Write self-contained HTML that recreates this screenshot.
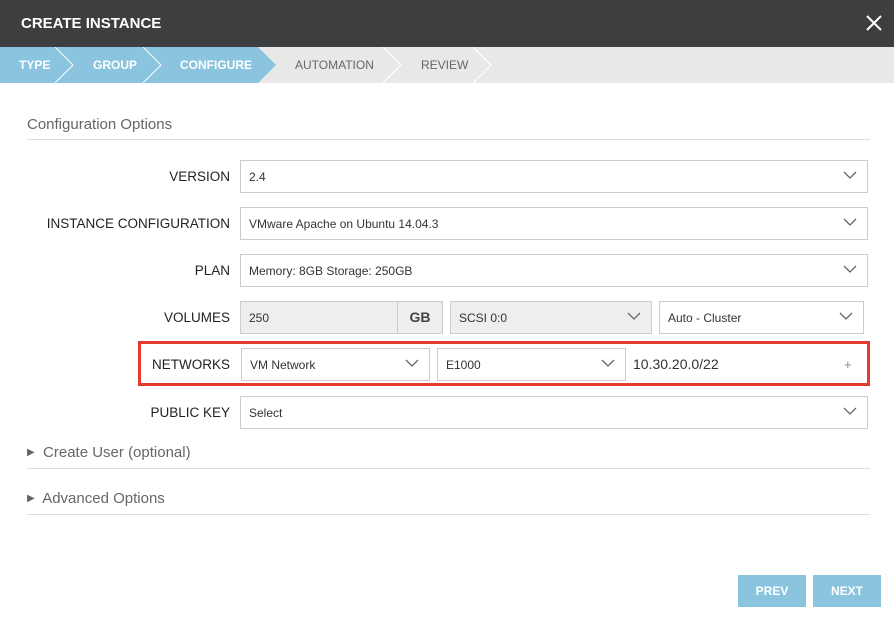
<!DOCTYPE html>
<html><head><style>
*{box-sizing:border-box;margin:0;padding:0}
body{width:894px;height:620px;background:#fff;font-family:"Liberation Sans",sans-serif;position:relative;overflow:hidden;color:#333}
.a{position:absolute}
.hdr{left:0;top:0;width:894px;height:47px;background:#3d3e40;color:#fff;font-size:15px;font-weight:bold;padding:15px 0 0 21px}
.bc{left:0;top:47px;width:894px;height:36px;background:#e8e8e6}
.bc span{position:absolute;top:11px;font-size:12px;font-weight:bold;color:#fff}
.lbl{font-size:13.5px;color:#222;text-align:right;width:200px;left:30px}
.sel{border:1px solid #ccc;background:#fff;height:33px;font-size:12px;padding:9px 8px;color:#333}
.chev{position:absolute;right:10px;top:9px}
.line{height:1px;background:#ddd;left:27px;width:843px}
.btn{background:#8ac4de;color:#fff;font-size:12px;font-weight:bold;text-align:center;padding-top:9px;height:32px}
</style></head><body>
<div class="a hdr">CREATE INSTANCE</div>
<svg class="a" style="left:865px;top:14px" width="18" height="18"><path d="M2 2L16 16M16 2L2 16" stroke="#fff" stroke-width="2"/></svg>
<div class="a bc">
<svg width="894" height="36" style="position:absolute;left:0;top:0">
<polygon points="0,0 258,0 276,18 258,36 0,36" fill="#8ac4de"/>
<polyline points="55,0 73,18 55,36" fill="none" stroke="#fff" stroke-width="1"/>
<polyline points="143,0 161,18 143,36" fill="none" stroke="#fff" stroke-width="1"/>
<polyline points="383,0 401,18 383,36" fill="none" stroke="#fff" stroke-width="1.2"/>
<polyline points="473,0 491,18 473,36" fill="none" stroke="#fff" stroke-width="1.2"/>
</svg>
<span style="left:19px">TYPE</span><span style="left:93px">GROUP</span><span style="left:180px">CONFIGURE</span>
<span style="left:295px;color:#666;font-weight:normal">AUTOMATION</span><span style="left:421px;color:#666;font-weight:normal">REVIEW</span>
</div>
<div class="a" style="left:27px;top:116px;font-size:15px;color:#666">Configuration Options</div>
<div class="a line" style="top:139px"></div>

<div class="a lbl" style="top:169px">VERSION</div>
<div class="a sel" style="left:240px;top:160px;width:628px">2.4<svg class="chev" width="14" height="10"><path d="M1 2l6 6 6-6" fill="none" stroke="#666" stroke-width="1.3"/></svg></div>
<div class="a lbl" style="top:216px">INSTANCE CONFIGURATION</div>
<div class="a sel" style="left:240px;top:207px;width:628px">VMware Apache on Ubuntu 14.04.3<svg class="chev" width="14" height="10"><path d="M1 2l6 6 6-6" fill="none" stroke="#666" stroke-width="1.3"/></svg></div>
<div class="a lbl" style="top:263px">PLAN</div>
<div class="a sel" style="left:240px;top:254px;width:628px">Memory: 8GB Storage: 250GB<svg class="chev" width="14" height="10"><path d="M1 2l6 6 6-6" fill="none" stroke="#666" stroke-width="1.3"/></svg></div>

<div class="a lbl" style="top:310px">VOLUMES</div>
<div class="a sel" style="left:240px;top:301px;width:203px;background:#eee">250</div>
<div class="a" style="left:397px;top:301px;width:46px;height:33px;border:1px solid #ccc;background:#eee;font-weight:bold;font-size:14px;text-align:center;padding-top:7px;color:#444">GB</div>
<div class="a sel" style="left:450px;top:301px;width:202px;background:#eee">SCSI 0:0<svg class="chev" width="14" height="10"><path d="M1 2l6 6 6-6" fill="none" stroke="#666" stroke-width="1.3"/></svg></div>
<div class="a sel" style="left:659px;top:301px;width:205px">Auto - Cluster<svg class="chev" width="14" height="10"><path d="M1 2l6 6 6-6" fill="none" stroke="#666" stroke-width="1.3"/></svg></div>

<div class="a" style="left:138px;top:341px;width:732px;height:45px;border:3px solid #e53a2f"></div>
<div class="a lbl" style="top:357px">NETWORKS</div>
<div class="a sel" style="left:241px;top:348px;width:189px">VM Network<svg class="chev" width="14" height="10"><path d="M1 2l6 6 6-6" fill="none" stroke="#666" stroke-width="1.3"/></svg></div>
<div class="a sel" style="left:437px;top:348px;width:189px">E1000<svg class="chev" width="14" height="10"><path d="M1 2l6 6 6-6" fill="none" stroke="#666" stroke-width="1.3"/></svg></div>
<div class="a" style="left:633px;top:356px;font-size:14px">10.30.20.0/22</div>
<div class="a" style="left:844px;top:357px;font-size:13px;color:#888">+</div>

<div class="a lbl" style="top:405px">PUBLIC KEY</div>
<div class="a sel" style="left:240px;top:396px;width:628px">Select<svg class="chev" width="14" height="10"><path d="M1 2l6 6 6-6" fill="none" stroke="#666" stroke-width="1.3"/></svg></div>

<div class="a" style="left:27px;top:444px;font-size:15px;color:#666"><span style="font-size:10px;position:relative;top:-2px">&#9654;</span>&nbsp; Create User (optional)</div>
<div class="a line" style="top:468px"></div>
<div class="a" style="left:27px;top:490px;font-size:15px;color:#666"><span style="font-size:10px;position:relative;top:-2px">&#9654;</span>&nbsp; Advanced Options</div>
<div class="a line" style="top:514px"></div>

<div class="a btn" style="left:738px;top:575px;width:68px">PREV</div>
<div class="a btn" style="left:813px;top:575px;width:68px">NEXT</div>
</body></html>
